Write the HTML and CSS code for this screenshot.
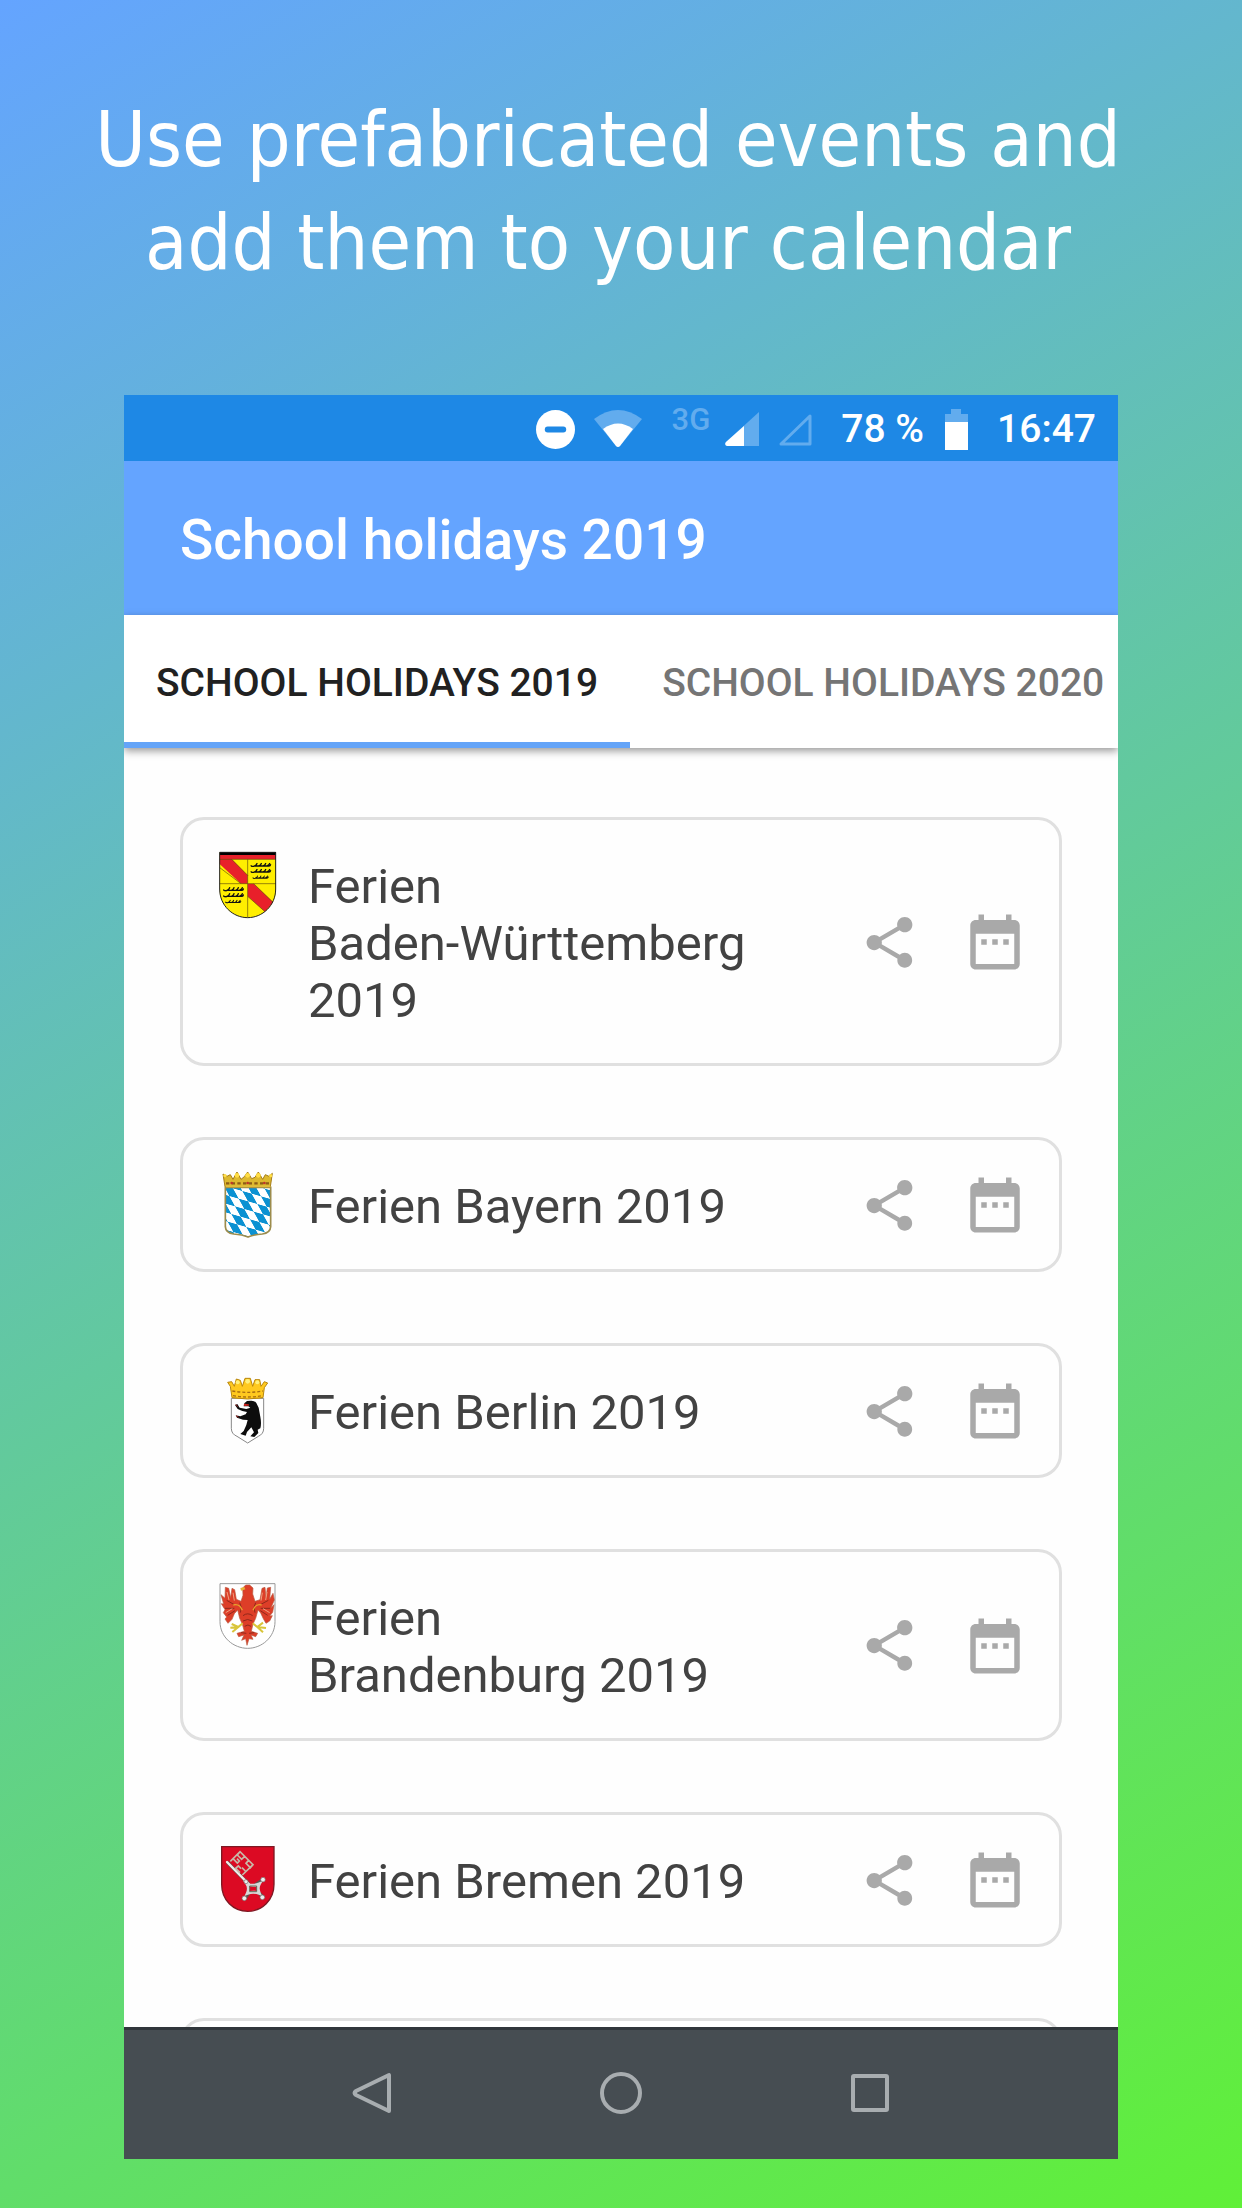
FILE: index.html
```
<!DOCTYPE html>
<html lang="en">
<head>
    <meta charset="UTF-8">
    <meta name="viewport" content="width=device-width, initial-scale=1">
    <title>School holidays 2019</title>
    <link rel="stylesheet" href="styles.css">
</head>

<body>
    <!-- shared icons -->
    <svg class="defs" aria-hidden="true">
        <symbol id="share" viewBox="0 0 24 24">
            <path d="M18 16.08c-.76 0-1.44.3-1.96.77L8.91 12.7c.05-.23.09-.46.09-.7s-.04-.47-.09-.7l7.05-4.11c.54.5 1.25.81 2.04.81 1.66 0 3-1.34 3-3s-1.34-3-3-3-3 1.34-3 3c0 .24.04.47.09.7L8.04 9.81C7.5 9.31 6.79 9 6 9c-1.66 0-3 1.34-3 3s1.34 3 3 3c.79 0 1.5-.31 2.04-.81l7.12 4.16c-.05.21-.08.43-.08.65 0 1.61 1.31 2.92 2.92 2.92s2.92-1.31 2.92-2.92-1.31-2.92-2.92-2.92z"/>
        </symbol>
        <symbol id="calendar" viewBox="0 0 24 24">
            <path d="M9 11H7v2h2v-2zm4 0h-2v2h2v-2zm4 0h-2v2h2v-2zm2-7h-1V2h-2v2H8V2H6v2H5c-1.11 0-1.99.9-1.99 2L3 20c0 1.1.89 2 2 2h14c1.1 0 2-.9 2-2V6c0-1.1-.9-2-2-2zm0 16H5V9h14v11z"/>
        </symbol>
        <symbol id="antler" viewBox="0 0 64 14">
            <path d="M2 9Q6 13 12 10H56Q60 10 61 6M12 10Q19 8 20 2M25 10Q32 8 33 2M38 10Q45 8 46 2M51 9Q57 7 58 2" fill="none" stroke="#111" stroke-width="4" stroke-linecap="round"/>
        </symbol>
    </svg>

    <h1 class="slogan">Use prefabricated events and<br>add them to your calendar</h1>

    <div class="phone">
        <div class="status">
            <svg class="dnd" viewBox="0 0 40 40"><circle cx="20" cy="20" r="20" fill="#fff"/><rect x="9" y="17" width="22" height="6" rx="3" fill="#1e88e5"/></svg>
            <svg class="wifi" viewBox="0 0 48 38"><path d="M0 9Q24-9 48 9L26 36Q24 38 22 36Z" fill="#62acee"/><path d="M9 19Q24 8 39 19L26 36Q24 38 22 36Z" fill="#fff"/></svg>
            <span class="network">3G</span>
            <svg class="signal" viewBox="0 0 34 34"><path d="M34 0V34H2Q-1 33 1 30Z" fill="#62acee"/><path d="M19 14V34H2Q-1 33 1 30Z" fill="#fff"/></svg>
            <svg class="signal" viewBox="0 0 34 34"><path d="M32 4V32H3Z" fill="none" stroke="#62acee" stroke-width="3" stroke-linejoin="round"/></svg>
            <span class="percent">78 %</span>
            <svg class="battery" viewBox="0 0 23 41"><path d="M0 5H6V0H16V5H23V13H0Z" fill="#62acee"/><path d="M0 13H23V41H0Z" fill="#fff"/></svg>
            <span class="clock">16:47</span>
        </div>

        <header class="appbar">
            <h2>School holidays 2019</h2>
        </header>

        <div class="tabs" role="tablist">
            <button class="tab active" role="tab" aria-selected="true">SCHOOL HOLIDAYS 2019</button>
            <button class="tab" role="tab" aria-selected="false">SCHOOL HOLIDAYS 2020</button>
        </div>

        <ul class="list">
            <li class="card">
                <svg class="arms" viewBox="27 36 204 204">
                    <clipPath id="bw"><path d="M43 39H213V150C213 200 172 236 128 236S43 200 43 150Z"/></clipPath>
                    <g clip-path="url(#bw)">
                        <path d="M43 39H213V240H43Z" fill="#ffee00"/>
                        <path d="M43 60H80L128 109V134H108L43 74Z" fill="#e8202a"/>
                        <path d="M128 134H146L205 190L180 218L128 172Z" fill="#e8202a"/>
                        <path d="M43 48H213V61H43Z" fill="#e8202a"/>
                        <path d="M43 39H213V48H43Z" fill="#000"/>
                        <path d="M43 61H213M43 134H213M128 61V236M80 61L128 109M43 85L108 134M146 134L204 190M128 172L180 218" stroke="#65520a" stroke-width="2"/>
                    </g>
                    <use href="#antler" x="136" y="71" width="64" height="14"/>
                    <use href="#antler" x="136" y="89" width="64" height="14"/>
                    <use href="#antler" x="142" y="108" width="50" height="14"/>
                    <use href="#antler" x="54" y="144" width="64" height="14"/>
                    <use href="#antler" x="54" y="162" width="64" height="14"/>
                    <use href="#antler" x="60" y="181" width="50" height="14"/>
                    <path d="M44 40H212V150C212 200 172 236 128 236S44 200 44 150Z" fill="none" stroke="#222" stroke-width="3"/>
                </svg>
                <p class="name">Ferien <span class="state">Baden-Württemberg</span> 2019</p>
                <button class="action" aria-label="Share"><svg class="share"><use href="#share"/></svg></button>
                <button class="action" aria-label="Add to calendar"><svg class="calendar"><use href="#calendar"/></svg></button>
            </li>
            <li class="card">
                <svg class="arms" viewBox="27 33 204 204">
                    <pattern id="lozenges" width="2" height="2" patternUnits="userSpaceOnUse" patternTransform="matrix(28 8 17 31 56 77)">
                        <path d="M0 0H2V2H0Z" fill="#fff"/>
                        <path d="M0 0H1V1H0ZM1 1H2V2H1Z" fill="#0b91d2"/>
                    </pattern>
                    <path d="M61 82H197V200Q196 219 172 222Q145 224 129 231Q112 224 86 222Q62 219 61 200Z" fill="url(#lozenges)" stroke="#9c8c4d" stroke-width="5"/>
                    <path d="M60 80L54 42L66 49L76 44L84 58L96 36L108 58L118 50L128 36L140 56L150 52L160 36L173 58L181 44L192 49L202 40L196 80Z" fill="#ddb92f" stroke="#a57d18" stroke-width="3"/>
                    <path d="M63 70H195" stroke="#8c5d16" stroke-width="7" stroke-dasharray="10 7"/>
                    <g fill="#ffdd45"><circle cx="96" cy="46" r="7"/><circle cx="128" cy="46" r="7"/><circle cx="160" cy="46" r="7"/><circle cx="60" cy="47" r="5"/><circle cx="197" cy="47" r="5"/></g>
                    <path d="M62 79H196" stroke="#e0bd3c" stroke-width="5"/>
                    <g fill="#bf352a"><circle cx="80" cy="69" r="4"/><circle cx="128" cy="69" r="4"/><circle cx="178" cy="69" r="4"/></g>
                </svg>
                <p class="name">Ferien Bayern 2019</p>
                <button class="action" aria-label="Share"><svg class="share"><use href="#share"/></svg></button>
                <button class="action" aria-label="Add to calendar"><svg class="calendar"><use href="#calendar"/></svg></button>
            </li>
            <li class="card">
                <svg class="arms" viewBox="27 36 204 204">
                    <path d="M79 100H176V190Q176 207 160 214L128 234L96 214Q79 207 79 190Z" fill="#fff" stroke="#888" stroke-width="3"/>
                    <path d="M81 98L76 64L68 52L80 50L88 64L94 42L106 46L112 64L120 40L136 40L143 64L150 44L164 44L168 64L178 50L188 54L178 68L174 98Q128 106 81 98Z" fill="#ffc91f" stroke="#b8860b" stroke-width="3"/>
                    <path d="M84 92Q128 100 172 92M82 78Q128 86 174 78" fill="none" stroke="#a66d12" stroke-width="4" stroke-dasharray="9 6"/>
                    <g fill="#fff07a"><circle cx="98" cy="52" r="6"/><circle cx="128" cy="49" r="7"/><circle cx="157" cy="52" r="6"/></g>
                    <path d="M118 115L126 108L137 107Q148 106 154 114L161 128L166 155Q170 176 166 190L158 194L160 204L148 216L136 214L147 202L139 187L126 201L122 212L106 207L116 198L124 180L128 165L114 164L96 158L92 151L106 154L122 148L126 141L112 138L98 132L90 120L97 117L104 128L124 132L136 128L130 124L116 124Z" fill="#0d0d0d"/>
                    <path d="M118 117L132 120L118 122ZM92 118L98 125M93 152L101 157" fill="#e32620" stroke="#e32620" stroke-width="2"/>
                </svg>
                <p class="name">Ferien Berlin 2019</p>
                <button class="action" aria-label="Share"><svg class="share"><use href="#share"/></svg></button>
                <button class="action" aria-label="Add to calendar"><svg class="calendar"><use href="#calendar"/></svg></button>
            </li>
            <li class="card">
                <svg class="arms" viewBox="27 39 204 204">
                    <path d="M45 41H210V155C210 202 170 235 128 235S45 202 45 155Z" fill="#fff" stroke="#999" stroke-width="3"/>
                    <path d="M113 54L122 45H134L144 54L143 72L150 94L165 89L171 55L180 52L183 82L187 54L197 52L194 88L204 70L208 90L198 113L207 104L203 127L194 138L202 137L194 153L183 160L175 146L167 129L159 120L152 145L144 162L139 184L158 190L152 200L138 195L144 208L132 206L126 226L122 206L110 211L117 195L101 200L96 190L118 184L112 162L104 145L98 120L88 131L81 148L69 160L60 147L65 141L55 128L60 119L49 101L56 102L48 74L60 85L61 52L71 55L77 83L81 55L89 59L94 88L108 94L114 76Z" fill="#dd3e28" stroke="#b8593f" stroke-width="2"/>
                    <path d="M104 98Q113 111 106 128M152 98Q143 111 150 128M114 137Q128 126 143 137M114 153Q128 144 142 153M119 169Q129 161 138 169M65 91L88 104M60 115L88 115M68 136L90 122M190 91L166 104M195 115L167 115M188 136L166 122M108 188L124 190M148 188L132 190" fill="none" stroke="#8f281b" stroke-width="3"/>
                    <path d="M66 66L72 90M84 68L88 92M186 66L182 90M172 68L168 92M62 128L82 116M194 128L174 116" stroke="#f0a080" stroke-width="3"/>
                    <path d="M106 54L118 51L121 58L108 62Z" fill="#e6b33b"/>
                    <path d="M85 105Q104 100 112 121M170 105Q152 100 144 121" fill="none" stroke="#e6a42d" stroke-width="4"/>
                    <path d="M113 160L100 171L80 162M100 171L76 173M100 171L82 186M143 160L157 171L174 158M157 171L183 174M157 171L174 187" fill="none" stroke="#d9c53a" stroke-width="6"/>
                </svg>
                <p class="name">Ferien <span class="state">Brandenburg 2019</span></p>
                <button class="action" aria-label="Share"><svg class="share"><use href="#share"/></svg></button>
                <button class="action" aria-label="Add to calendar"><svg class="calendar"><use href="#calendar"/></svg></button>
            </li>
            <li class="card">
                <svg class="arms" viewBox="27 30 204 204">
                    <path d="M50 32H207V145C207 193 171 226 128 226S50 193 50 145Z" fill="#dc0a23" stroke="#7e1823" stroke-width="4"/>
                    <g fill="none" stroke="#5f5550" stroke-width="10">
                        <path d="M66 78L132 145M143 152L174 131M143 154L118 190M143 154L177 185"/>
                    </g>
                    <path d="M66 78L132 145" stroke="#f2ecea" stroke-width="7" stroke-linecap="round"/>
                    <path d="M76 76L105 47L144 86L112 117M84 68L97 81L103 75L96 68M105 47L97 57L110 70L118 62M144 86L136 95L123 82L130 74M105 110L92 97L100 90L108 98M121 105L111 95" fill="none" stroke="#c8b8a8" stroke-width="5"/>
                    <path d="M126 144Q144 152 163 144Q156 156 163 172Q145 165 127 172Q134 156 126 144Z" fill="#dc0a23" stroke="#d8d8d8" stroke-width="9"/>
                    <path d="M134 150H155V167H134Z" fill="none" stroke="#665" stroke-width="3"/>
                    <g fill="#eee" stroke="#776b69" stroke-width="2"><circle cx="174" cy="131" r="7"/><circle cx="118" cy="187" r="7"/><circle cx="172" cy="184" r="7"/><circle cx="123" cy="137" r="6"/></g>
                </svg>
                <p class="name">Ferien Bremen 2019</p>
                <button class="action" aria-label="Share"><svg class="share"><use href="#share"/></svg></button>
                <button class="action" aria-label="Add to calendar"><svg class="calendar"><use href="#calendar"/></svg></button>
            </li>
            <li class="card"></li>
        </ul>

        <nav class="navbar">
            <button aria-label="Back"><svg viewBox="0 0 42 42"><path d="M38 3V39L5 23Q2 21 5 19Z"/></svg></button>
            <button aria-label="Home"><svg viewBox="0 0 42 42"><circle cx="21" cy="21" r="19"/></svg></button>
            <button aria-label="Recent apps"><svg viewBox="0 0 42 42"><rect x="4" y="4" width="34" height="34" rx="1"/></svg></button>
        </nav>
    </div>
</body>

</html>
```
FILE: styles.css
```
* {
    box-sizing: border-box;
}
body {
    display: flex;
    flex-direction: column;
    height: 100vh;
    margin: 0;
    padding: 0 124px 49px;
    font-family: Roboto, sans-serif;
    background: linear-gradient(150deg, #64a4ff, #60f038);
}
button {
    padding: 0;
    border: 0;
    background: none;
    font: inherit;
}
svg {
    display: block;
    flex: none;
}
.defs {
    position: absolute;
    width: 0;
    height: 0;
}

.slogan {
    height: 395px;
    margin: 0 -62px 0 -88px;
    padding-top: 88px;
    color: #fff;
    font-family: "DejaVu Sans Condensed", "DejaVu Sans", sans-serif;
    font-size: 77px;
    font-stretch: condensed;
    font-weight: normal;
    line-height: 103px;
    text-align: center;
    white-space: nowrap;
}

.phone {
    display: flex;
    flex: 1;
    flex-direction: column;
    min-height: 0;
    overflow: hidden;
    background: #fefefe;
}

.status {
    display: flex;
    flex: none;
    align-items: center;
    justify-content: flex-end;
    height: 66px;
    padding: 2px 22px 0 0;
    background: #1e88e5;
    color: #fff;
    font-size: 39px;
    font-weight: 500;
}
.dnd {
    width: 39px;
    height: 39px;
}
.wifi {
    width: 48px;
    height: 38px;
    margin-left: 19px;
}
.network {
    margin: 0 15px 20px 30px;
    color: #62acee;
    font-size: 31px;
}
.signal {
    width: 34px;
    height: 34px;
    margin-right: 19px;
}
.percent {
    margin: 0 21px 0 10px;
}
.battery {
    width: 23px;
    height: 41px;
    margin-right: 29px;
}

.appbar {
    display: flex;
    flex: none;
    align-items: center;
    height: 154px;
    padding: 4px 56px 0;
    background: #64a4ff;
    color: #fff;
}
.appbar h2 {
    margin: 0;
    font-size: 55px;
    font-weight: 500;
}

.tabs {
    position: relative;
    z-index: 1;
    display: flex;
    flex: none;
    height: 133px;
    background: #fff;
    box-shadow: 0 3px 8px rgba(0, 0, 0, 0.4);
}
.tab {
    flex: none;
    padding: 8px 32px 0;
    border-bottom: 6px solid transparent;
    color: #757575;
    font-size: 39px;
    font-weight: 500;
}
.tab.active {
    border-color: #64a4f8;
    color: #212121;
}

.list {
    display: flex;
    flex: 1;
    flex-direction: column;
    gap: 71px;
    min-height: 0;
    margin: 0;
    padding: 69px 56px 0;
    overflow: hidden;
    list-style: none;
}
.card {
    display: flex;
    flex: none;
    align-items: center;
    min-height: 135px;
    padding: 31px 31px 30px;
    border: 3px solid #e0e0e0;
    border-radius: 24px;
}
.arms {
    align-self: flex-start;
    width: 68px;
    height: 68px;
}
.name {
    flex: 1;
    margin: 0 26px;
    padding: 7px 0 4px;
    color: #424242;
    font-size: 49px;
    line-height: 57px;
}
.state {
    white-space: nowrap;
}
.action {
    flex: none;
    fill: #a9a9a9;
}
.share {
    width: 61px;
    height: 61px;
}
.calendar {
    width: 66px;
    height: 66px;
    margin-left: 42px;
}

.navbar {
    display: flex;
    flex: none;
    align-items: center;
    height: 132px;
    padding: 0 124px 3px;
    border-top: 3px solid #30363b;
    background: #464d52;
}
.navbar button {
    flex: 1;
}
.navbar svg {
    width: 42px;
    height: 42px;
    margin: 0 auto;
    fill: none;
    stroke: #a8adb0;
    stroke-width: 4;
    stroke-linejoin: round;
}
```
